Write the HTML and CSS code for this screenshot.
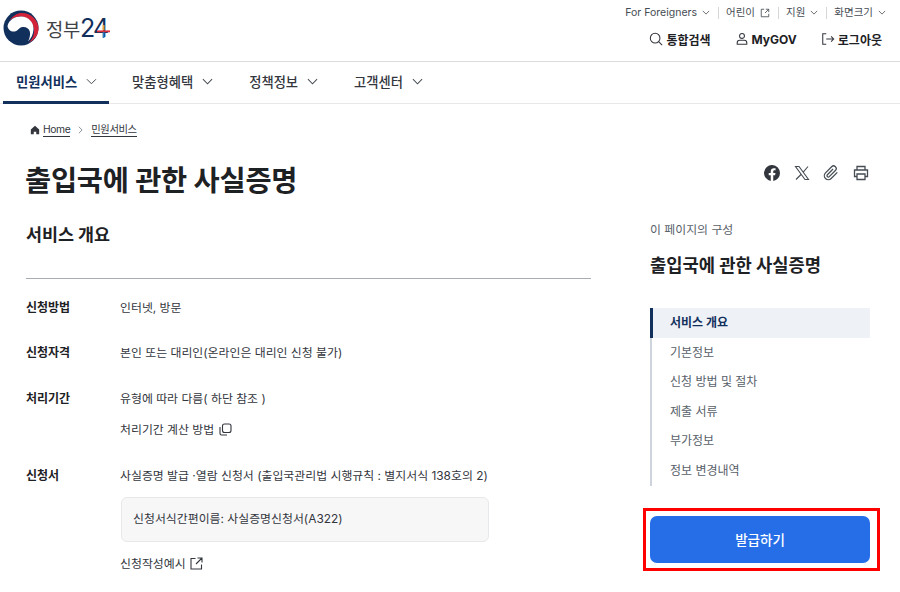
FILE: index.html
```html
<!DOCTYPE html>
<html lang="ko">
<head>
<meta charset="utf-8">
<title>출입국에 관한 사실증명</title>
<link rel="stylesheet" href="styles.css">
</head>
<body>
<header class="header">
  <a class="logo">
    <svg class="logo-mark" viewBox="0 0 36 36" width="36" height="36">
      <circle cx="18" cy="18" r="17.5" fill="#12305c"/>
      <path d="M6.500 10.500 C10 5.500 14.500 3 19 3 C28 3 35.500 10.500 35.500 18.500 C35.500 25 31.500 30 26 32.500 C30 28.500 31.500 24 31 19.500 C30.200 12 24.500 6.500 18 6.500 C13.500 6.500 9.500 8 6.500 10.500Z" fill="#d3233a"/>
      <path d="M4.500 16 C6 9.500 12 6.500 18 6.500 C25.500 6.500 31 12.500 30.500 19.500 C30.200 24 28.500 28 25 31.500 C26.800 28 27.500 24.500 26.800 21.500 C26 18 22.500 16.500 19.500 17 C16 17.500 15 21 11.500 21.500 C8 22 5 19.500 4.500 16Z" fill="#fff"/>
    </svg>
    <span class="logo-text">정부<span class="logo-num">2<span class="logo-four">4<svg class="logo-plus" viewBox="0 0 12 12"><path d="M5.200 0h1.700v5H5.200z" fill="#e8a03a"/><path d="M0 5h12v1.700H0z" fill="#d9303e"/><path d="M5.200 6.700h1.700V12H5.200z" fill="#2a7fc4"/></svg></span></span></span>
  </a>
  <div class="header-right">
    <ul class="util">
      <li>For Foreigners <svg class="chev-s" viewBox="0 0 10 6"><path d="M1 1l4 4 4-4"/></svg></li>
      <li>어린이 <svg class="ext-s" viewBox="0 0 12 12"><path d="M5 1.500H1.500v9h9V7M7 1.500h3.500V5M10.500 1.500L6 6"/></svg></li>
      <li>지원 <svg class="chev-s" viewBox="0 0 10 6"><path d="M1 1l4 4 4-4"/></svg></li>
      <li>화면크기 <svg class="chev-s" viewBox="0 0 10 6"><path d="M1 1l4 4 4-4"/></svg></li>
    </ul>
    <div class="actions">
      <a class="action"><svg class="act-icon" viewBox="0 0 16 16"><circle cx="7" cy="7" r="5.500"/><path d="M11 11l4 4"/></svg>통합검색</a>
      <a class="action"><svg class="act-icon" viewBox="0 0 16 16"><circle cx="8" cy="4.500" r="2.800"/><path d="M2.500 14v-1.500c0-1.800 1.500-3 3-3h5c1.500 0 3 1.200 3 3V14z"/></svg>MyGOV</a>
      <a class="action"><svg class="act-icon" viewBox="0 0 16 16"><path d="M6 2H2v12h4M6 8h8.500M11.500 5l3 3-3 3"/></svg>로그아웃</a>
    </div>
  </div>
</header>

<nav class="gnb">
  <a class="gnb-item active">민원서비스<svg class="chev" viewBox="0 0 12 7"><path d="M1 1l5 5 5-5"/></svg></a>
  <a class="gnb-item">맞춤형혜택<svg class="chev" viewBox="0 0 12 7"><path d="M1 1l5 5 5-5"/></svg></a>
  <a class="gnb-item">정책정보<svg class="chev" viewBox="0 0 12 7"><path d="M1 1l5 5 5-5"/></svg></a>
  <a class="gnb-item">고객센터<svg class="chev" viewBox="0 0 12 7"><path d="M1 1l5 5 5-5"/></svg></a>
</nav>

<main class="page">
  <div class="crumbs">
    <svg class="home" viewBox="0 0 12 12"><path d="M6 1L1 5.500V11h3.500V8h3v3H11V5.500z"/></svg>
    <a class="crumb">Home</a>
    <svg class="crumb-sep" viewBox="0 0 6 10"><path d="M1 1l4 4-4 4"/></svg>
    <a class="crumb">민원서비스</a>
  </div>
  <div class="title-row">
    <h1>출입국에 관한 사실증명</h1>
    <div class="share">
      <svg class="share-icon" viewBox="0 0 16 16"><path class="solid" d="M16 8a8 8 0 1 0-9.250 7.900v-5.590H4.720V8h2.030V6.240c0-2 1.190-3.110 3.020-3.110.87 0 1.790.160 1.790.160v1.970h-1c-1 0-1.310.620-1.310 1.250V8h2.220l-.350 2.310H9.250v5.590A8 8 0 0 0 16 8z"/></svg>
      <svg class="share-icon" viewBox="0 0 16 16"><path class="thin" d="M1.500 1.500h3.500l9.500 13H11zM14 1.500L9 7.300M7 9.500l-5 5"/></svg>
      <svg class="share-icon" viewBox="0 0 24 24"><path class="clip" d="M21.440 11.050l-9.190 9.190a6 6 0 0 1-8.490-8.490l9.190-9.190a4 4 0 0 1 5.660 5.660l-9.200 9.190a2 2 0 0 1-2.830-2.830l8.490-8.480"/></svg>
      <svg class="share-icon" viewBox="0 0 16 16"><path class="print" d="M4 5V1.500h8V5M4 11.500H1.500V5h13v6.500H12M4 9h8v5.500H4z"/></svg>
    </div>
  </div>

  <div class="columns">
    <section class="content">
      <h2>서비스 개요</h2>
      <dl class="overview">
        <div class="row"><dt>신청방법</dt><dd><p>인터넷, 방문</p></dd></div>
        <div class="row roomy"><dt>신청자격</dt><dd><p>본인 또는 대리인(온라인은 대리인 신청 불가)</p></dd></div>
        <div class="row roomy"><dt>처리기간</dt><dd>
          <p>유형에 따라 다름( 하단 참조 )</p>
          <p class="sub">처리기간 계산 방법 <svg class="copy" viewBox="0 0 13 13"><rect x="3.500" y="1" width="8.500" height="8.500" rx="2"/><path d="M1 4v6.500c0 1 .6 1.500 1.500 1.500H8"/></svg></p>
        </dd></div>
        <div class="row"><dt>신청서</dt><dd>
          <p>사실증명 발급 ·열람 신청서 (출입국관리법 시행규칙 : 별지서식 138호의 2)</p>
          <div class="note">신청서식간편이름: 사실증명신청서(A322)</div>
          <p>신청작성예시 <svg class="ext" viewBox="0 0 13 13"><path d="M5.500 1.500H1v10.500h10.500V7.500M7.500 1H12v4.500M12 1L6 7"/></svg></p>
        </dd></div>
      </dl>
    </section>

    <aside class="side">
      <p class="side-label">이 페이지의 구성</p>
      <p class="side-title">출입국에 관한 사실증명</p>
      <ul class="toc">
        <li class="current">서비스 개요</li>
        <li>기본정보</li>
        <li>신청 방법 및 절차</li>
        <li>제출 서류</li>
        <li>부가정보</li>
        <li>정보 변경내역</li>
      </ul>
      <div class="cta-frame"><button class="cta">발급하기</button></div>
    </aside>
  </div>
</main>
</body>
</html>
```

FILE: styles.css
```css
* { box-sizing: border-box; }
html, body { margin: 0; padding: 0; }
body {
  width: 900px;
  height: 592px;
  overflow: hidden;
  background: #fff;
  color: #1e2124;
  font-family: Inter, "Noto Sans CJK KR", sans-serif;
  font-size: 13px;
}
p, ul, dl, dd, h1, h2 { margin: 0; padding: 0; }
ul { list-style: none; }

.header {
  height: 62px;
  border-bottom: 1px solid #dcdcdc;
  display: flex;
  justify-content: space-between;
  padding: 0 18px 0 3px;
}
.logo { display: flex; align-items: flex-start; padding-top: 10px; gap: 7px; }
.logo-mark { display: block; }
.logo-text {
  font-size: 18.800px;
  line-height: 36px;
  color: #3f4347;
  letter-spacing: -0.3px;
  font-weight: 400;
}
.logo-num { color: #12305c; font-size: 25px; letter-spacing: -1.800px; font-weight: 400; }
.logo-four { position: relative; }
.logo-plus { position: absolute; right: -3px; top: 12px; width: 13px; height: 13px; }

.header-right { display: flex; flex-direction: column; align-items: flex-end; }
.util {
  display: flex;
  align-items: center;
  height: 15px;
  margin-top: 5px;
  font-size: 10.500px;
  color: #464c53;
  margin-right: -4px;
}
.util li { display: flex; align-items: center; gap: 5px; padding: 0 8px 0 7px; border-left: 1px solid #d6d6d6; height: 12px; line-height: 12px; }
.util li:first-child { border-left: 0; }
.util li:last-child { padding-right: 0; }
.chev-s { width: 8px; height: 5px; fill: none; stroke: #464c53; stroke-width: 1; }
.ext-s { width: 10px; height: 10px; fill: none; stroke: #464c53; stroke-width: 1; }

.actions { display: flex; gap: 24px; margin-top: 10px; }
.action { display: flex; align-items: center; gap: 3px; font-size: 12px; font-weight: 700; color: #1e2124; height: 18px; }
.act-icon { width: 14px; height: 14px; fill: none; stroke: #33363d; stroke-width: 1.200; }

.gnb {
  height: 42px;
  display: flex;
  padding-left: 3px;
  border-bottom: 1px solid #e8e8e8;
}
.gnb-item {
  display: flex;
  align-items: center;
  gap: 9px;
  padding: 0 12px 3px 13px;
  margin-right: 11px;
  font-size: 13.300px;
  font-weight: 500;
  color: #33363d;
  height: 42px;
  white-space: nowrap;
}
.gnb-item.active { color: #12305c; font-weight: 700; border-bottom: 3px solid #12305c; padding-bottom: 0; width: 106px; margin-right: 10px; }
.chev { width: 11px; height: 7px; fill: none; stroke: #464c53; stroke-width: 1.100; }

.page { padding: 0 30px 0 26px; }
.crumbs { display: flex; align-items: center; height: 16px; margin: 18px 0 0 4px; font-size: 10.300px; color: #33363d; }
.home { width: 10px; height: 10px; fill: #33363d; margin-right: 3px; }
.crumb { border-bottom: 1px solid #33363d; line-height: 13px; letter-spacing: -0.4px; }
.crumb-sep { width: 5px; height: 8px; fill: none; stroke: #6d7882; stroke-width: 1; margin: 0 8px; }

.title-row { display: flex; justify-content: space-between; align-items: flex-start; margin-top: 21px; height: 44px; }
h1 { font-size: 28.400px; font-weight: 700; line-height: 44px; color: #1e2124; letter-spacing: -0.2px; margin-left: -1px; }
.share { display: flex; gap: 13.700px; padding-top: 6px; margin-right: 1px; }
.share-icon { width: 16px; height: 16px; }
.solid { fill: #33363d; }
.thin { fill: none; stroke: #464c53; stroke-width: 1.100; }
.clip { fill: none; stroke: #464c53; stroke-width: 1.900; }
.print { fill: none; stroke: #464c53; stroke-width: 1.300; }

.columns { display: flex; justify-content: space-between; margin-top: 17px; }
.content { width: 565px; }
h2 { font-size: 17.400px; font-weight: 700; line-height: 28px; height: 58px; margin-top: 1px; border-bottom: 1px solid #a8adb3; }

.overview { padding-top: 19px; }
.row { display: flex; margin-bottom: 26px; }
.row.roomy { margin-bottom: 27px; }
.row dt { width: 94px; flex: none; font-size: 12px; font-weight: 700; line-height: 19px; }
.row dd { flex: 1; font-size: 11.900px; line-height: 19px; color: #33363d; }
.sub { margin-top: 12px; }
.copy, .ext { width: 13px; height: 13px; vertical-align: -2px; fill: none; stroke: #33363d; stroke-width: 1.100; margin-left: 1px; }
.note {
  margin: 12px 0 12px 1px;
  width: 368px;
  height: 45px;
  padding: 0 11px;
  line-height: 42px;
  background: #f7f7f8;
  border: 1px solid #e6e8ea;
  border-radius: 6px;
}

.side { width: 220px; flex: none; }
.side-label { font-size: 11.900px; line-height: 16px; color: #58616a; margin-top: 2px; }
.side-title { font-size: 17.700px; font-weight: 700; line-height: 24px; margin-top: 16px; color: #1e2124; }
.toc { margin-top: 30px; border-left: 2px solid #cdd4de; }
.toc li { height: 29.600px; line-height: 29.600px; padding-left: 18px; font-size: 12px; color: #58616a; }
.toc li.current {
  margin-left: -2px;
  border-left: 3px solid #12305c;
  padding-left: 17px;
  background: #eef1f6;
  color: #12305c;
  font-weight: 700;
}
.cta-frame {
  margin: 22px 0 0 -7px;
  width: 237px;
  height: 63px;
  border: 3px solid #f00;
  padding: 5px 7px 5px 4px;
}
.cta {
  display: block;
  width: 220px;
  height: 47px;
  padding-bottom: 2px;
  background: #256ee8;
  border: 0;
  border-radius: 7px;
  color: #fff;
  font-family: inherit;
  font-size: 13.500px;
  font-weight: 500;
}
```
